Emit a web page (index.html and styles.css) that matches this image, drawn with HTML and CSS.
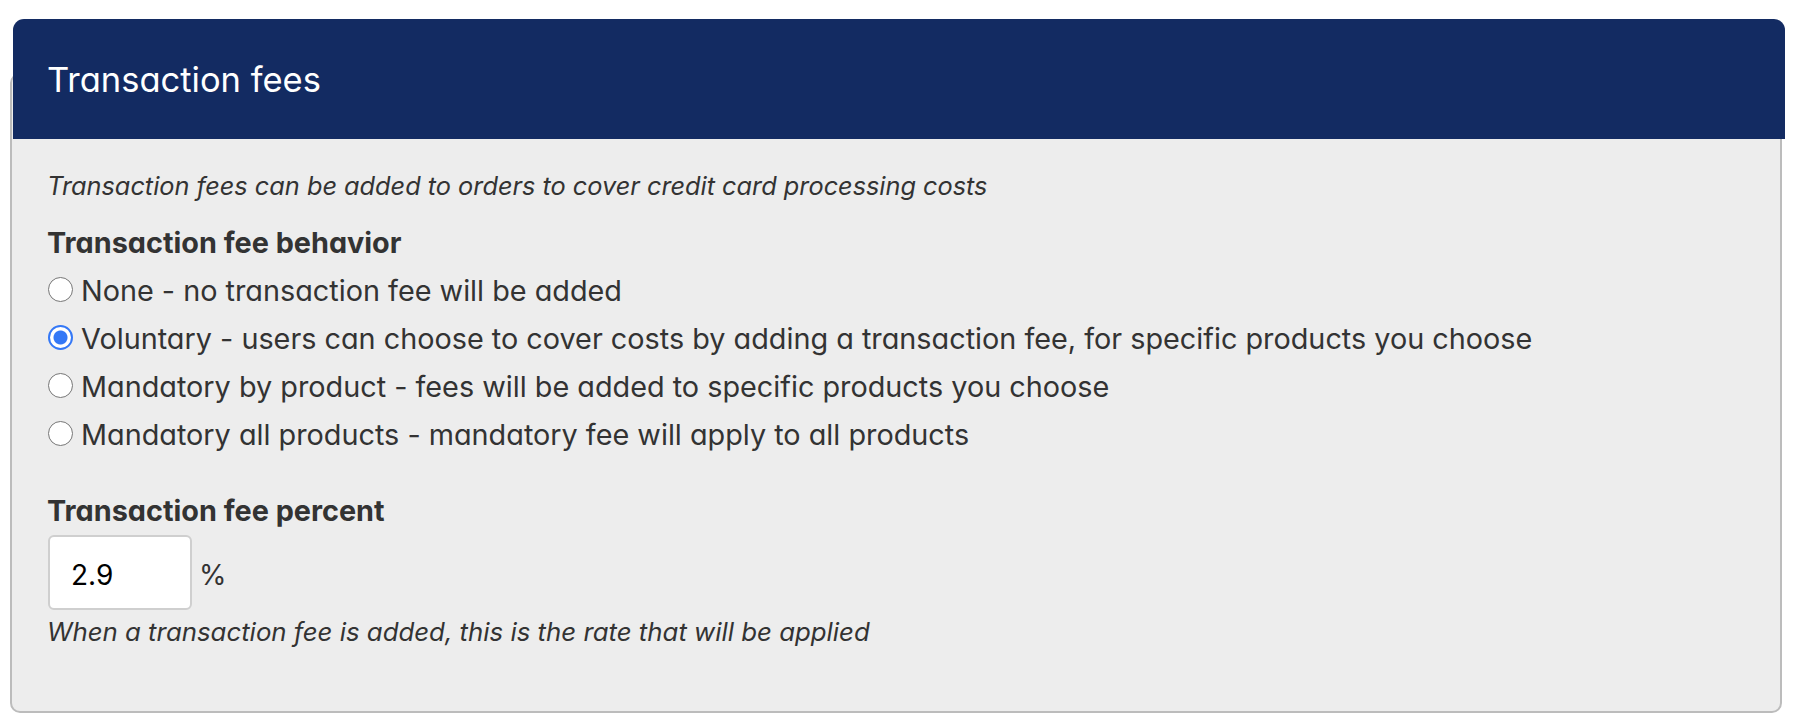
FILE: index.html
```html
<!DOCTYPE html>
<html lang="en">
<head>
<meta charset="utf-8">
<title>Transaction fees</title>
<link rel="stylesheet" href="styles.css">
</head>
<body>
<div class="page">
  <div class="panel-heading">
    <h2 class="panel-title">Transaction fees</h2>
  </div>
  <div class="panel-body">
    <p class="intro">Transaction fees can be added to orders to cover credit card processing costs</p>
    <div class="field">
      <div class="field-label">Transaction fee behavior</div>
      <label class="radio-row"><input class="radio" type="radio" name="behavior"><span>None - no transaction fee will be added</span></label>
      <label class="radio-row"><input class="radio" type="radio" name="behavior" checked><span>Voluntary - users can choose to cover costs by adding a transaction fee, for specific products you choose</span></label>
      <label class="radio-row"><input class="radio" type="radio" name="behavior"><span>Mandatory by product - fees will be added to specific products you choose</span></label>
      <label class="radio-row"><input class="radio" type="radio" name="behavior"><span>Mandatory all products - mandatory fee will apply to all products</span></label>
    </div>
    <div class="field field-percent">
      <div class="field-label">Transaction fee percent</div>
      <div class="input-row">
        <input class="text-input" type="text" value="2.9">
        <span class="unit">%</span>
      </div>
      <p class="help">When a transaction fee is added, this is the rate that will be applied</p>
    </div>
  </div>
</div>
</body>
</html>
```

FILE: styles.css
```css
html, body {
  margin: 0;
  padding: 0;
  background: #ffffff;
}

body {
  font-family: Inter, "Noto Sans", "DejaVu Sans", sans-serif;
  font-feature-settings: "cv11" 1;
  color: #333333;
}

.page {
  padding: 19px 20px 0 10px;
}

.panel-heading {
  position: relative;
  z-index: 1;
  margin-left: 3px;
  margin-right: -3px;
  height: 120px;
  background: #132b62;
  border-radius: 11px 11px 0 0;
  padding: 0 34px;
  box-sizing: border-box;
}

.panel-title {
  margin: 0;
  padding-top: 41px;
  font-size: 34.5px;
  line-height: 40px;
  font-weight: 400;
  color: #ffffff;
}

.panel-body {
  margin-top: -66px;
  border: 2px solid #bcbcbc;
  border-radius: 10px;
  background: #ededed;
  padding: 93px 36px 61px 35px;
}

.intro {
  margin: 0;
  font-size: 25.3px;
  line-height: 36px;
  font-style: italic;
}

.field {
  margin-top: 19px;
}

.field-label {
  font-size: 28.8px;
  line-height: 40px;
  font-weight: 700;
}

.field > .field-label + .radio-row {
  margin-top: 4px;
}

.radio-row {
  display: flex;
  align-items: flex-start;
  font-size: 28.8px;
  line-height: 48px;
}

.radio {
  appearance: none;
  -webkit-appearance: none;
  flex: none;
  width: 25px;
  height: 25px;
  margin: 10px 8px 0 1px;
  border: 1.5px solid #767676;
  border-radius: 50%;
  background: #ffffff;
  box-sizing: border-box;
}

.radio:checked {
  border: 2.5px solid #3478f6;
  background: radial-gradient(circle, #3478f6 0 6.5px, #ffffff 7.5px);
}

.field-percent {
  margin-top: 32px;
}

.input-row {
  display: flex;
  align-items: center;
  margin-top: 4px;
  padding-left: 1px;
}

.text-input {
  width: 144px;
  height: 75px;
  box-sizing: border-box;
  border: 2px solid #cfcfcf;
  border-radius: 6px;
  background: #ffffff;
  padding: 4px 22px 0 21px;
  font-family: inherit;
  font-feature-settings: inherit;
  font-size: 28px;
  color: #000000;
  outline: none;
}

.unit {
  margin-left: 7px;
  font-size: 28px;
  padding-top: 4px;
}

.help {
  margin: 4px 0 0 0;
  font-size: 25.8px;
  line-height: 36px;
  font-style: italic;
}
```
